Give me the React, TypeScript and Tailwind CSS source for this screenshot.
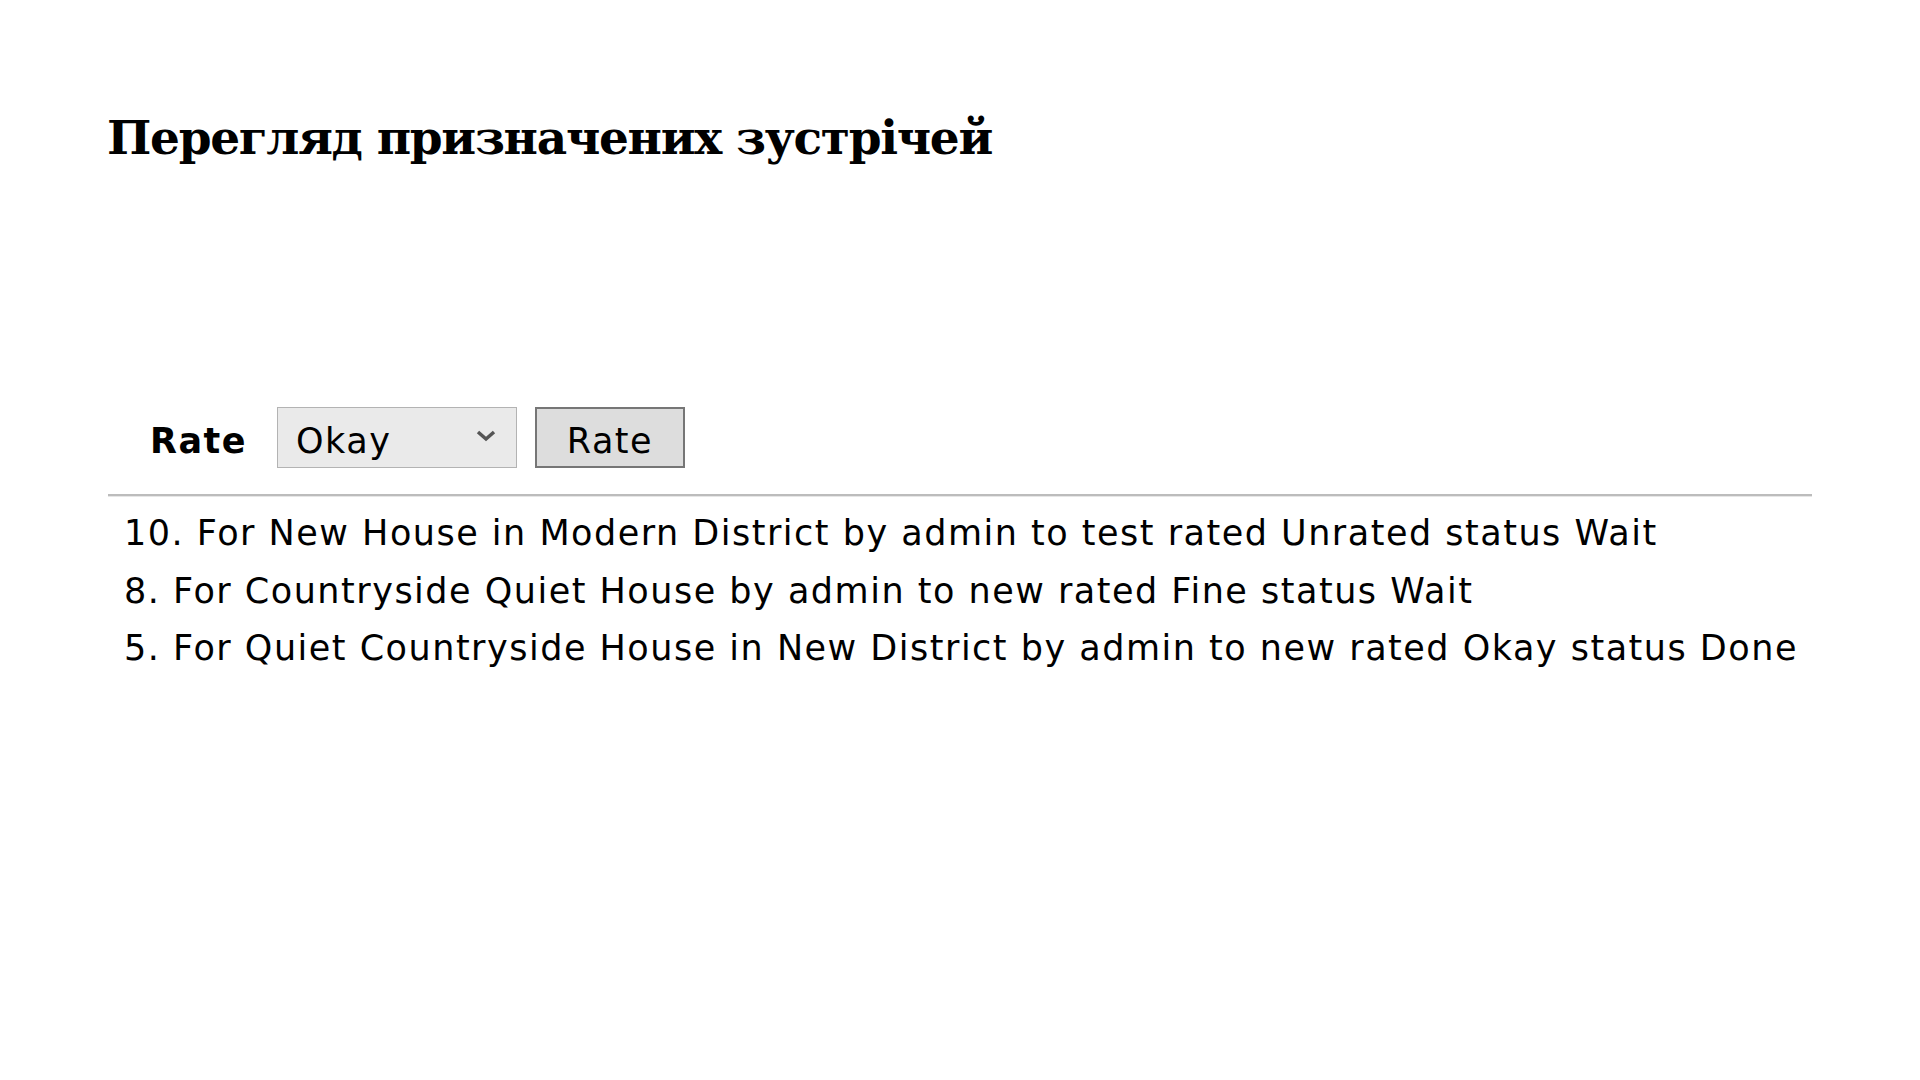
import React from "react";

const items = [
  "10. For New House in Modern District by admin to test rated Unrated status Wait",
  "8. For Countryside Quiet House by admin to new rated Fine status Wait",
  "5. For Quiet Countryside House in New District by admin to new rated Okay status Done",
];

export default function App() {
  return (
    <div className="min-h-[1080px] w-[1920px] bg-white text-black">
      <div className="px-[108px] pt-[112px]">
        <h1 className="-ml-px text-[47px] font-bold leading-[52px] tracking-[-1.3px] [font-family:'DejaVu_Serif',serif]">
          Перегляд призначених зустрічей
        </h1>
        <div className="mt-[243px] flex h-[61px] items-center tracking-[1.5px] [font-family:'DejaVu_Sans',sans-serif]">
          <span className="ml-[42px] w-[127px] pt-[8px] text-[35px] font-bold leading-none">Rate</span>
          <div className="relative flex h-[61px] w-[240px] items-center border border-[#b3b3b3] bg-[#eaeaea] pl-[18px] pt-[8px] text-[35px] leading-none">
            Okay
            <svg
              className="absolute right-[19px] top-[21px]"
              width="22"
              height="14"
              viewBox="0 0 22 14"
              fill="none"
            >
              <path d="M3 3 L11 10 L19 3" stroke="#555" strokeWidth="3.5" />
            </svg>
          </div>
          <div className="ml-[18px] flex h-[61px] w-[150px] items-center justify-center border-2 border-[#767676] bg-[#dddddd] pt-[8px] text-[35px] leading-none">
            Rate
          </div>
        </div>
        <div className="mt-[26px] h-[3px] border-t-2 border-[#bcbcbc] bg-[#e6e6e6]" />
        <ul className="mt-[8px] pl-[16px] text-[35px] leading-[57.5px] tracking-[1.5px] [font-family:'DejaVu_Sans',sans-serif]">
          {items.map((t) => (
            <li key={t} className="whitespace-nowrap">
              {t}
            </li>
          ))}
        </ul>
      </div>
    </div>
  );
}
